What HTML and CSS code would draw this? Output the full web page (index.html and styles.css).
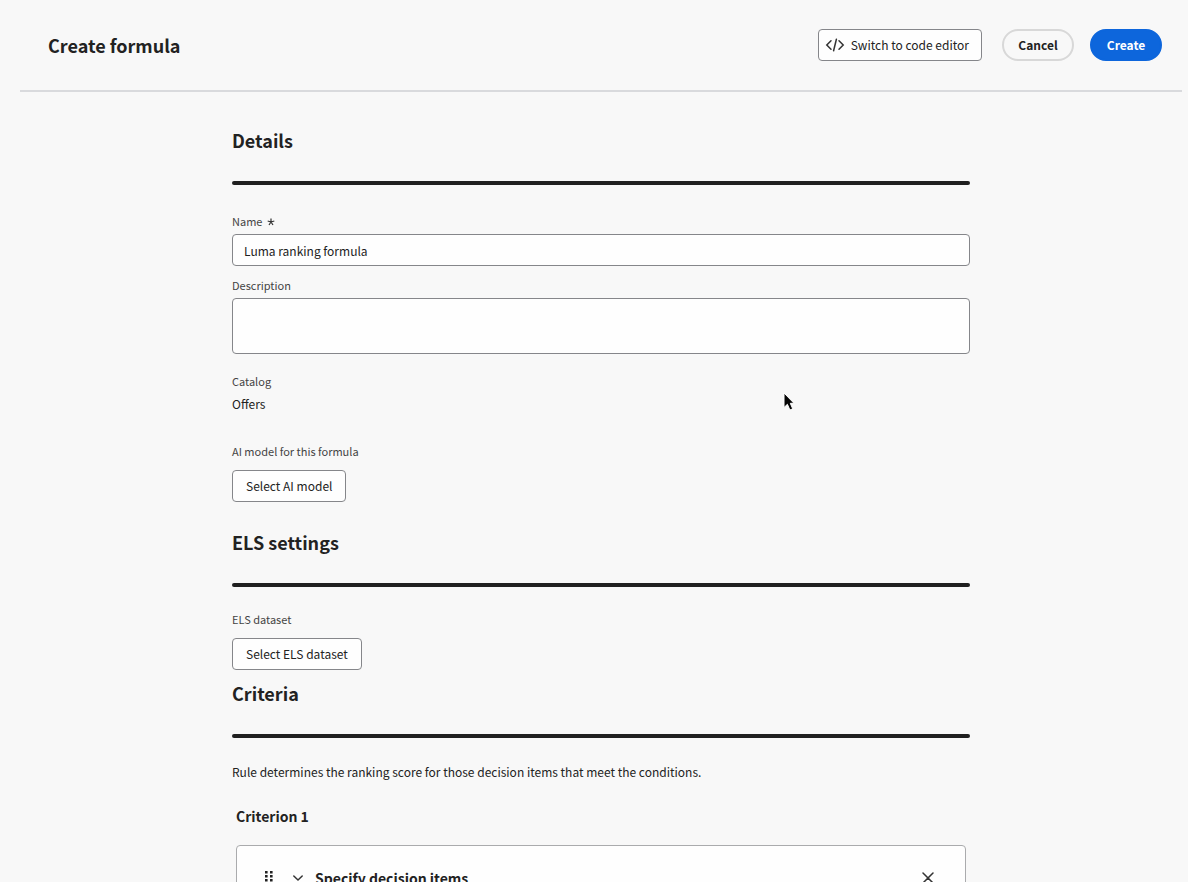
FILE: index.html
```html
<!DOCTYPE html>
<html lang="en">
<head>
<meta charset="utf-8">
<title>Create formula</title>
<link rel="stylesheet" href="styles.css">
</head>
<body>
<div class="app">
  <header class="header">
    <h1 class="title">Create formula</h1>
    <div class="actions">
      <button class="button button-code" type="button">
        <svg class="code-icon" width="20" height="16" viewBox="0 0 20 16" aria-hidden="true"><path d="M6 3.8 1.8 8 6 12.2M14 3.8 18.2 8 14 12.2M11.4 2.2 8.6 13.8"/></svg>
        Switch to code editor
      </button>
      <button class="pill pill-outline" type="button">Cancel</button>
      <button class="pill pill-primary" type="button">Create</button>
    </div>
  </header>
  <main class="content">
    <section class="section">
      <h2 class="heading">Details</h2>
      <div class="fields">
        <div class="field">
          <label class="label" for="name">Name <svg class="required" width="8" height="8" viewBox="0 0 8 8" aria-hidden="true"><path d="M4 4V.5M4 4 .7 3M4 4l3.3-1M4 4 2 7M4 4l2 3"/></svg></label>
          <input class="input" id="name" type="text" value="Luma ranking formula" required>
        </div>
        <div class="field">
          <label class="label" for="description">Description</label>
          <textarea class="input textarea" id="description"></textarea>
        </div>
      </div>
      <dl class="catalog">
        <dt class="label">Catalog</dt>
        <dd class="value">Offers</dd>
      </dl>
      <div class="picker">
        <label class="label" for="ai-model">AI model for this formula</label>
        <button class="button" id="ai-model" type="button">Select AI model</button>
      </div>
    </section>
    <section class="section section-els">
      <h2 class="heading">ELS settings</h2>
      <div class="picker">
        <label class="label" for="els-dataset">ELS dataset</label>
        <button class="button" id="els-dataset" type="button">Select ELS dataset</button>
      </div>
    </section>
    <section class="section section-criteria">
      <h2 class="heading">Criteria</h2>
      <p class="text">Rule determines the ranking score for those decision items that meet the conditions.</p>
      <div class="criterion">
        <h3 class="subheading">Criterion 1</h3>
        <div class="card">
          <div class="card-header">
            <svg class="drag" width="8" height="14" viewBox="0 0 8 14" aria-hidden="true"><path d="M0 0h2.6v2.6H0zM5 0h2.6v2.6H5zM0 4h2.6v2.6H0zM5 4h2.6v2.6H5zM0 8h2.6v2.6H0zM5 8h2.6v2.6H5z"/></svg>
            <button class="icon-button" type="button" aria-label="Collapse"><svg class="stroke-icon" width="12" height="12" viewBox="0 0 12 12"><path d="M1.8 4 6 8 10.2 4"/></svg></button>
            <h4 class="card-title">Specify decision items</h4>
            <button class="icon-button" type="button" aria-label="Remove"><svg class="stroke-icon" width="12" height="12" viewBox="0 0 12 12"><path d="m1 1 10 10M11 1 1 11"/></svg></button>
          </div>
        </div>
      </div>
    </section>
  </main>
</div>
<svg class="cursor" width="14" height="20" viewBox="0 0 14 20" aria-hidden="true"><path d="M1 1v14.5l3.4-3.2 2.5 5.7 2.8-1.2-2.4-5.5H11z"/></svg>
</body>
</html>
```
FILE: styles.css
```css
* {
  box-sizing: border-box;
}

body {
  margin: 0;
  background: #f8f8f8;
  color: #222;
  font-family: "Noto Sans CJK SC", "Noto Sans", sans-serif;
  font-size: 12px;
  line-height: 20px;
}

h1, h2, h3, h4, p, dl, dd {
  margin: 0;
}

button, input, textarea {
  font: inherit;
  color: inherit;
}

.app {
  height: 100vh;
  overflow: hidden;
  padding: 0 6px 0 20px;
}

.header {
  display: flex;
  align-items: center;
  justify-content: space-between;
  height: 92px;
  padding: 0 20px 0 28px;
  border-bottom: 2px solid #d9dadd;
}

.title, .heading {
  font-size: 18px;
  font-weight: 700;
  line-height: 26px;
}

.actions {
  display: flex;
  gap: 16px;
}

.button {
  height: 32px;
  padding: 0 12px;
  border: 1px solid #85868a;
  border-radius: 4px;
  background: #fefefe;
}

.button-code {
  display: flex;
  align-items: center;
  gap: 6px;
  margin-right: 4px;
  padding-left: 6px;
}

.code-icon, .stroke-icon {
  fill: none;
  stroke: #333;
  stroke-width: 1.5;
  stroke-linecap: round;
}

.pill {
  height: 32px;
  min-width: 72px;
  padding: 0 14px;
  border: 2px solid #d8d8d8;
  border-radius: 16px;
  background: transparent;
  font-weight: 700;
}

.pill-primary {
  border-color: #0d66dc;
  background: #0d66dc;
  color: #fff;
}

.content {
  max-width: 738px;
  margin: 0 auto;
  padding-top: 35px;
}

.heading::after {
  content: "";
  display: block;
  height: 4px;
  margin: 28px 0 24px;
  border-radius: 2px;
  background: #202020;
}

.section-els {
  margin-top: 27px;
}

.section-criteria {
  margin-top: 10px;
}

.fields {
  display: grid;
  gap: 11px;
  padding-top: 4px;
}

.field {
  display: grid;
  gap: 5px;
}

.label {
  display: block;
  color: #444;
  font-size: 11px;
  line-height: 16px;
}

.required {
  margin-left: 2px;
  fill: none;
  stroke: #333;
  stroke-width: 1.2;
}

.input {
  width: 100%;
  height: 32px;
  padding: 0 11px;
  border: 1px solid #85868a;
  border-radius: 4px;
  background: #fefefe;
}

.textarea {
  height: 56px;
  padding: 5px 11px;
  resize: none;
}

.catalog {
  display: grid;
  gap: 5px;
  margin: 19px 0 29px;
}

.picker {
  display: grid;
  justify-items: start;
  gap: 11px;
}

.picker .button {
  padding: 0 13px;
}

.criterion {
  padding: 24px 4px 0;
}

.subheading, .card-title {
  font-size: 14px;
  font-weight: 700;
  line-height: 20px;
}

.card {
  min-height: 160px;
  margin-top: 19px;
  padding: 22px 31px 22px 28px;
  border: 1px solid #aaabad;
  border-radius: 4px;
  background: #fefefe;
}

.card-header {
  display: flex;
  align-items: center;
}

.drag {
  margin-right: 19px;
  fill: #222;
}

.icon-button {
  display: flex;
  padding: 0;
  border: 0;
  background: none;
}

.card-title {
  flex: 1;
  margin-left: 11px;
}

.cursor {
  position: absolute;
  left: 783px;
  top: 392px;
  fill: #050505;
  stroke: #fff;
  pointer-events: none;
}
```
